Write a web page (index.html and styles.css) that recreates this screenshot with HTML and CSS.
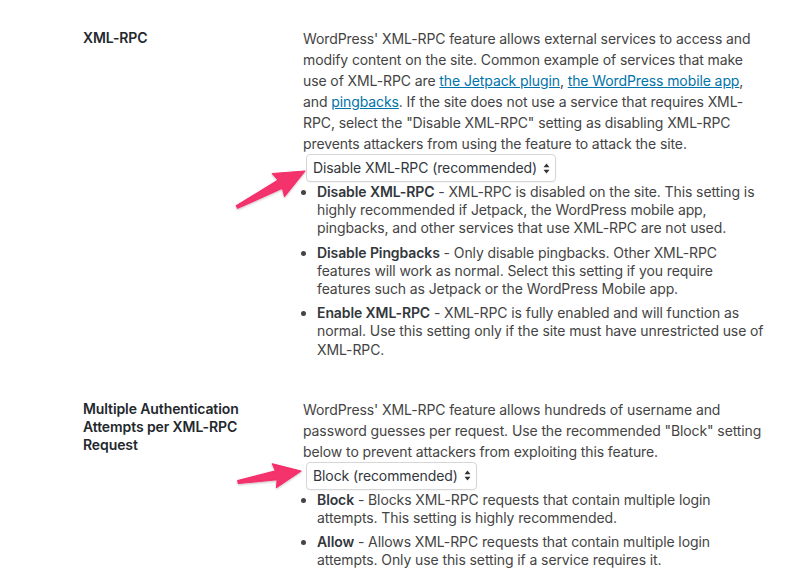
FILE: index.html
```html
<!DOCTYPE html>
<html lang="en">
<head>
<meta charset="utf-8">
<title>XML-RPC settings</title>
<link rel="stylesheet" href="styles.css">
</head>
<body>
<div class="form">
  <div class="row">
    <div class="label">XML-RPC</div>
    <div class="field">
      <p>WordPress' XML-RPC feature allows external services to access and<br>modify content on the site. Common example of services that make<br>use of XML-RPC are <a href="#">the Jetpack plugin</a>, <a href="#">the WordPress mobile app</a>,<br>and <a href="#">pingbacks</a>. If the site does not use a service that requires XML-<br>RPC, select the "Disable XML-RPC" setting as disabling XML-RPC<br>prevents attackers from using the feature to attack the site.</p>
      <div class="select"><span>Disable XML-RPC (recommended)</span><svg class="updown" width="7" height="11" viewBox="0 0 7 11"><path d="M3.5 0.5 L6.5 4.3 L0.5 4.3 Z M3.5 10.5 L6.5 6.7 L0.5 6.7 Z" fill="#333"/></svg></div>
      <ul>
        <li><strong>Disable XML-RPC</strong> - XML-RPC is disabled on the site. This setting is<br>highly recommended if Jetpack, the WordPress mobile app,<br>pingbacks, and other services that use XML-RPC are not used.</li>
        <li><strong>Disable Pingbacks</strong> - Only disable pingbacks. Other XML-RPC<br>features will work as normal. Select this setting if you require<br>features such as Jetpack or the WordPress Mobile app.</li>
        <li><strong>Enable XML-RPC</strong> - XML-RPC is fully enabled and will function as<br>normal. Use this setting only if the site must have unrestricted use of<br>XML-RPC.</li>
      </ul>
    </div>
  </div>
  <div class="row">
    <div class="label">Multiple Authentication Attempts per XML-RPC Request</div>
    <div class="field">
      <p>WordPress' XML-RPC feature allows hundreds of username and<br>password guesses per request. Use the recommended "Block" setting<br>below to prevent attackers from exploiting this feature.</p>
      <div class="select"><span>Block (recommended)</span><svg class="updown" width="7" height="11" viewBox="0 0 7 11"><path d="M3.5 0.5 L6.5 4.3 L0.5 4.3 Z M3.5 10.5 L6.5 6.7 L0.5 6.7 Z" fill="#333"/></svg></div>
      <ul>
        <li><strong>Block</strong> - Blocks XML-RPC requests that contain multiple login<br>attempts. This setting is highly recommended.</li>
        <li><strong>Allow</strong> - Allows XML-RPC requests that contain multiple login<br>attempts. Only use this setting if a service requires it.</li>
      </ul>
    </div>
  </div>
</div>
<svg class="arrows" width="808" height="578" viewBox="0 0 808 578">
  <defs>
    <filter id="sh" x="-20%" y="-20%" width="140%" height="140%">
      <feDropShadow dx="0" dy="1" stdDeviation="1" flood-color="#000" flood-opacity="0.25"/>
    </filter>
  </defs>
  <polygon filter="url(#sh)" points="305,171 284.6,196.5 282.4,188.1 237.7,208.3 236.3,205.7 278.2,180.1 272.4,173.5" fill="#f4306c" stroke="#f4306c" stroke-width="1.2" stroke-linejoin="round"/>
  <polygon filter="url(#sh)" points="301,471 276.5,487.4 277.2,479.7 238.3,483.5 237.7,480.5 275.6,470.9 272.3,463.8" fill="#f4306c" stroke="#f4306c" stroke-width="1.2" stroke-linejoin="round"/>
</svg>
</body>
</html>
```

FILE: styles.css
```css
html, body {
  margin: 0;
  background: #fff;
}
body {
  font-family: Inter, "Noto Sans", "Liberation Sans", sans-serif;
  font-size: 14px;
  letter-spacing: -0.1px;
  color: #444;
  position: relative;
  width: 808px;
  height: 578px;
  overflow: hidden;
}
.form {
  padding: 9px 0 0 83px;
}
.row {
  display: grid;
  grid-template-columns: 210px 505px;
}
.label {
  padding: 20px 10px 20px 0;
  font-weight: 600;
  line-height: 18.2px;
  color: #23282d;
  width: 170px;
}
.field {
  padding: 15px 0 15px 10px;
  line-height: 18.2px;
  white-space: nowrap;
}
.field p {
  margin: 4px 0 0;
  line-height: 21px;
}
.field a {
  color: #0073aa;
  text-decoration: underline;
}
.select {
  display: inline-flex;
  align-items: center;
  gap: 6px;
  height: 26px;
  margin-left: 3px;
  padding: 0 5px 0 6px;
  border: 1px solid #d6d6d6;
  border-radius: 4px;
  background: #fff;
  color: #32373c;
  box-shadow: 0 1px 1px rgba(0,0,0,0.04);
}
.updown {
  display: block;
}
.field ul {
  margin: 1px 0 0;
  padding-left: 14px;
  list-style: disc;
}
.field li {
  margin-bottom: 6px;
}
.field strong {
  font-weight: 600;
  color: #32373c;
}
.arrows {
  position: absolute;
  left: 0;
  top: 0;
  pointer-events: none;
}
```
